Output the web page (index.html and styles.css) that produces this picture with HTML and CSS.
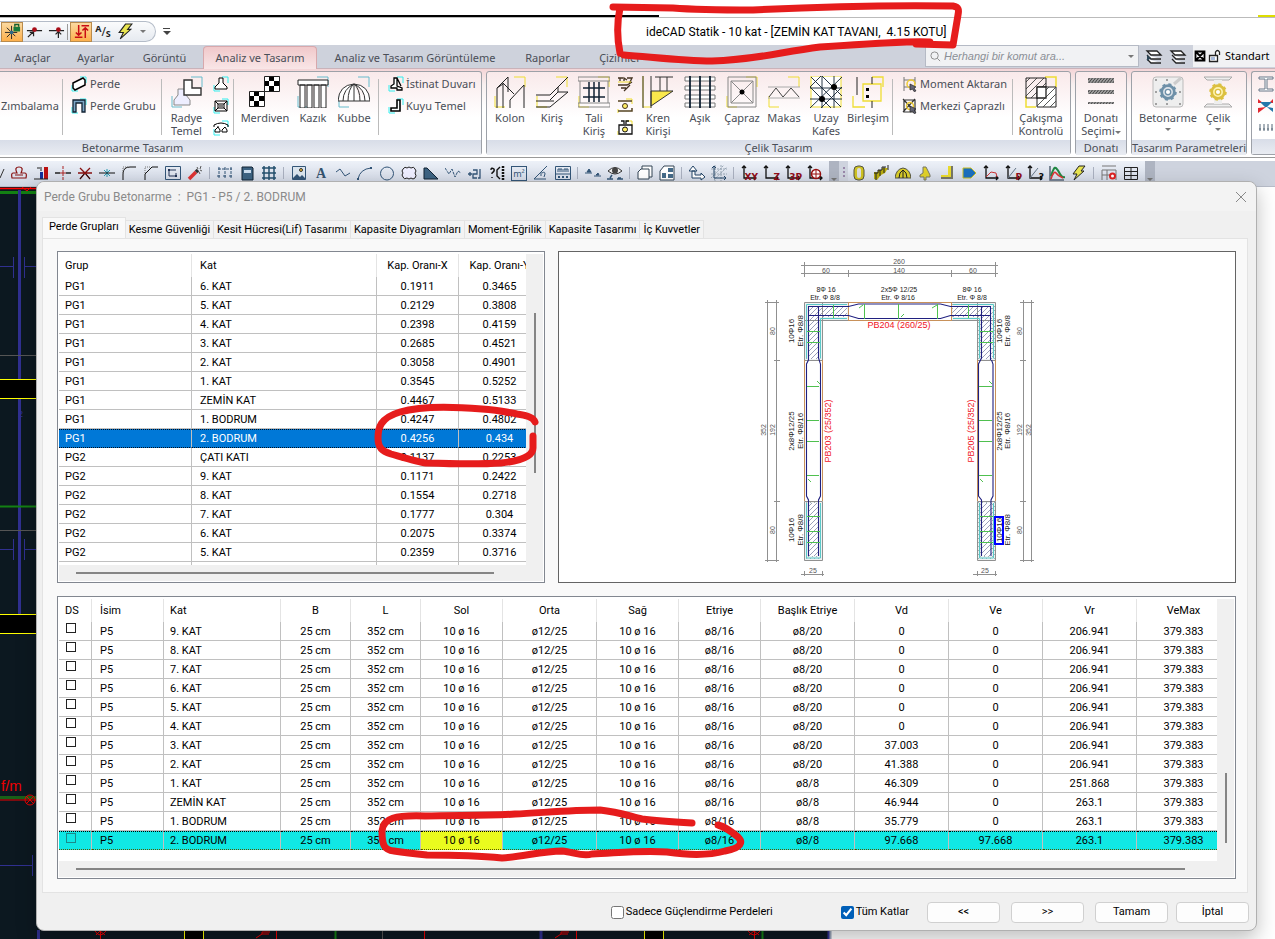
FILE: index.html
```html
<!DOCTYPE html>
<html lang="tr">
<head>
<meta charset="utf-8">
<title>ideCAD Statik</title>
<link rel="stylesheet" href="styles.css">
</head>
<body>
<svg class="defs" aria-hidden="true">
  <defs>
    <pattern id="hatch" width="5" height="5" patternUnits="userSpaceOnUse"><path d="M0 5 5 0" stroke="#8088a8" stroke-width=".8"/></pattern>
    <pattern id="speck" width="4" height="4" patternUnits="userSpaceOnUse"><rect width="4" height="4" fill="#eef2f2"/><path d="M0 0h1v1H0zM2 2h1v1H2z" fill="#a4b4b4"/></pattern>
    <pattern id="diag" width="7" height="7" patternUnits="userSpaceOnUse"><path d="M0 7 7 0" stroke="#444" stroke-width=".9"/></pattern>
    <pattern id="bars" width="3" height="4" patternUnits="userSpaceOnUse"><rect width="3" height="4" fill="#999"/><path d="M0 4 3 0" stroke="#444"/></pattern>
    <pattern id="check" width="10" height="10" patternUnits="userSpaceOnUse"><rect width="10" height="10" fill="#fff"/><path d="M0 0h5v5H0zM5 5h5v5H5z"/></pattern>
    <symbol id="bolt" viewBox="0 0 16 16"><path d="M8 1h6l-4 5h3L3 15l3-6H2z" fill="#e9e550" stroke="#222"/></symbol>
    <symbol id="axes" viewBox="0 0 16 16"><path d="M3 1v12h12M1 3l2-2 2 2M13 11l2 2-2 2" fill="none" stroke="#111" stroke-width="1.3"/></symbol>
    <symbol id="gear" viewBox="0 0 20 20"><circle cx="10" cy="10" r="7" stroke-width="3"/><circle cx="10" cy="10" r="8.5" fill="none" stroke-width="2.5" stroke-dasharray="3.3 3.4"/><circle cx="10" cy="10" r="3" fill="#fff" stroke-width="1.5"/></symbol>
  </defs>
</svg>

<header>
  <div class="topline"><i></i></div>
  <div class="titlebar">
    <div class="quick">
      <button class="on" aria-label="Kilitli kesişim"><svg viewBox="0 0 18 18"><path d="M1 10h13M8 3v14M3 5l9 9M3 15l6-6" stroke="#222" fill="none"/><circle cx="8" cy="10" r="2" fill="#2d6b88"/><path d="M10 4h7v5h-7z" fill="#177a3c"/><path d="M11.500 4V1.500h4V4" fill="none" stroke="#176030" stroke-width="1.500"/></svg></button>
      <button aria-label="Uç nokta"><svg viewBox="0 0 18 18"><path d="M1 8h16M8 9l-6 6M4 10h4v4" stroke="#222" fill="none" stroke-width="1.300"/><circle cx="9" cy="7" r="2.500" fill="#a80d17"/></svg></button>
      <button aria-label="Orta nokta"><svg viewBox="0 0 18 18"><path d="M1 8h16M11 9v7M8 12l3-3 3 3" stroke="#222" fill="none" stroke-width="1.300"/><circle cx="11" cy="7" r="2.500" fill="#a80d17"/></svg></button>
      <span class="vsep"></span>
      <button class="on" aria-label="Yükseklik"><svg viewBox="0 0 18 18"><path d="M6 2v11M3 10l3 3 3-3M2 15h8M13 16V5M10 8l3-3 3 3M9 3h8" stroke="#c90d14" fill="none" stroke-width="1.600"/></svg></button>
      <button class="as" aria-label="Analiz"><b>A</b>/<b class="low">S</b></button>
      <button aria-label="Hızlı"><svg viewBox="0 0 16 16"><use href="#bolt"/></svg></button>
      <button class="narrow" aria-label="Liste"><span class="caret"></span></button>
    </div>
    <button class="more" aria-label="Özelleştir"><span class="caret dark"></span></button>
    <h1>ideCAD Statik - 10 kat - [ZEMİN KAT TAVANI,&nbsp; 4.15 KOTU]</h1>
  </div>
  <nav class="tabs">
    <a href="#" class="t1">Araçlar</a><a href="#" class="t2">Ayarlar</a><a href="#" class="t3">Görüntü</a><a href="#" class="t4 active">Analiz ve Tasarım</a><a href="#" class="t5">Analiz ve Tasarım Görüntüleme</a><a href="#" class="t6">Raporlar</a><a href="#" class="t7">Çizimler</a>
    <label class="search"><svg viewBox="0 0 12 12"><circle cx="5" cy="5" r="4" fill="none" stroke="#888"/><path d="M8 8l3 3" stroke="#888"/></svg><input type="text" placeholder="Herhangi bir komut ara..." aria-label="Komut ara"><span class="caret"></span></label>
    <button class="layer" aria-label="Katmanlar"><svg viewBox="0 0 18 16"><path d="M2 2h10l4 4H6zM2 6l4 4h10M2 10l4 4h10" fill="#fff" stroke="#222" stroke-width="1.300"/><path d="M2 6l4 3-4 3z" fill="#2c4557"/></svg></button>
    <button class="layer" aria-label="Katman seç"><svg viewBox="0 0 18 16"><path d="M2 2h10l4 4H6zM3 6l4 4h9M3 10l4 4h9" fill="#fff" stroke="#222" stroke-width="1.300"/></svg></button>
    <div class="style"><svg viewBox="0 0 28 14"><path d="M1.500 2.500h9v9h-9zM2 3l8 8M10 3l-8 8" fill="none" stroke="#000" stroke-width="1.800"/><path d="M15.500 6.500h8v6h-8zM21.500 6V3q2-3 4 0v3" fill="#fff" stroke="#222" stroke-width="1.300"/><path d="M17 8h4v3h-4z" fill="#a7b9d8"/></svg>Standart</div>
  </nav>

  <div class="ribbon">
    <section class="group g1">
      <div class="items">
        <div class="col z"><button>Zımbalama</button></div><span class="sep"></span>
        <div class="col c2">
          <button><svg viewBox="0 0 16 16"><path d="M1 9v6h6M9 1h6v6" stroke="#3ee" fill="none"/><path d="M2 7l10-5 2 2v5L4 14l-2-2z" fill="#fff" stroke="#000" stroke-width="1.500"/></svg>Perde</button>
          <button><svg viewBox="0 0 16 16"><path d="M1 9v6h6M9 1h6v6" stroke="#3ee" fill="none"/><path d="M2 2h12v12h-3V5H5v9H2z" fill="#7da6c6" stroke="#123" stroke-width="1.300"/></svg>Perde Grubu</button>
        </div><span class="sep"></span>
        <button class="big w49"><svg viewBox="0 0 32 32"><path d="M20 1h11v10M1 20v11h10" stroke="#6bc" fill="none"/><path d="M7 13h8v6l4 5v5H3v-5l4-5z" fill="#eef" stroke="#888"/><path d="M13 4h8v8h9v7H13z" fill="#fff" stroke="#333" stroke-width="1.400"/></svg><span>Radye<br>Temel</span></button>
        <div class="minis">
          <button aria-label="Tekil"><svg viewBox="0 0 16 16"><path d="M1 9v6h6M9 1h6v6" stroke="#3ee" fill="none"/><path d="M6 2h4v5l4 4v2H2v-2l4-4z" fill="#fff" stroke="#000"/></svg></button>
          <button aria-label="Kaset"><svg viewBox="0 0 16 16"><path d="M1 9v6h6M9 1h6v6" stroke="#3ee" fill="none"/><path d="M2 3h12v10H2zM5 6h6v4H5zM2 3l3 3M14 3l-3 3M2 13l3-3M14 13l-3-3M6 8h4" fill="none" stroke="#000"/></svg></button>
          <button aria-label="Sürekli"><svg viewBox="0 0 16 16"><path d="M1 9v6h6M9 1h6v6" stroke="#3ee" fill="none"/><path d="M1 7V5q7-4 14 0v2M2 12v-2l3-3v-1M7 12v-2L5 7M2 12h5M9 12v-2l3-3M14 12v-2l-2-3M9 12h5" fill="none" stroke="#000"/></svg></button>
        </div><span class="sep"></span>
        <button class="big w62"><svg viewBox="0 0 32 32"><path d="M0.500 15.500h15v-15h15v15h-15v15h-15z" fill="url(#check)" stroke="#222"/></svg><span>Merdiven</span></button>
        <button class="big w34"><svg viewBox="0 0 32 32"><path d="M20 1h11v10M1 20v11h10" stroke="#6bc" fill="none"/><path d="M1 4h30v5H1zM3 9h5v23H3zM10 9h5v23h-5zM17 9h5v23h-5zM24 9h5v23h-5z" fill="#fff" stroke="#222"/></svg><span>Kazık</span></button>
        <button class="big w48"><svg viewBox="0 0 32 32"><path d="M20 1h11v10M1 20v11h10" stroke="#6bc" fill="none"/><path d="M0 25Q1 9 16 8q15 1 16 17zM5 25Q5 13 16 8M10 25q0-12 6-17M16 25V8M22 25q0-12-6-17M27 25q0-12-11-17" fill="#fff" stroke="#333"/></svg><span>Kubbe</span></button>
        <span class="sep"></span>
        <div class="col c3">
          <button><svg viewBox="0 0 16 16"><path d="M1 9v6h6M9 1h6v6" stroke="#3ee" fill="none"/><path d="M6 2h3v8l5 2v2H9v-2H3v-2l3-2zM9 2l4 8" fill="#fff" stroke="#000" stroke-width="1.300"/></svg>İstinat Duvarı</button>
          <button><svg viewBox="0 0 16 16"><path d="M1 9v6h6M9 1h6v6" stroke="#3ee" fill="none"/><path d="M9 2h3v11H3v-3h6z" fill="#fff" stroke="#000" stroke-width="1.600"/></svg>Kuyu Temel</button>
        </div>
      </div>
      <h2 class="left">Betonarme Tasarım</h2>
    </section>

    <section class="group g2">
      <div class="items">
        <button class="big w42"><svg viewBox="0 0 32 32"><path d="M20 1h11v10M1 20v11h10" stroke="#ed3" fill="none"/><path d="M3 32V12L14 1v15M3 12l6-4M9 32V7l11 11M16 32V24L30 9v23" fill="none" stroke="#222"/></svg><span>Kolon</span></button>
        <button class="big w42"><svg viewBox="0 0 32 32"><path d="M20 1h11v10M1 20v11h10" stroke="#ed3" fill="none"/><path d="M0 19h14L32 1M0 25h18M0 31h14L32 16H22v-5M22 16l-8 8" fill="none" stroke="#222"/></svg><span>Kiriş</span></button>
        <button class="big w42"><svg viewBox="0 0 32 32"><path d="M20 1h11v10M1 20v11h10" stroke="#ed3" fill="none"/><path d="M0 1h32v4H0zM0 27h32v4H0zM2 5v22M30 5v22" fill="none" stroke="#888"/><path d="M5 12h22M5 21h22M11 6v20M21 6v20M16 6v20" stroke="#123" stroke-width="1.500"/></svg><span>Tali<br>Kiriş</span></button>
        <div class="minis">
          <button aria-label="Kafes"><svg viewBox="0 0 16 16"><path d="M1 2h5M3 2v3M7 5V2l3 2M10 2h5l-3 6M1 9h9l5-3M4 12h5M7 15l6-6" stroke="#432" fill="none" stroke-width="1.300"/><path d="M1 6h13" stroke="#ed3"/></svg></button>
          <button aria-label="Levha"><svg viewBox="0 0 16 16"><path d="M1 15v-4M9 1h6v5" stroke="#ed3" fill="none"/><path d="M1 3h14M1 13h14v-3" fill="none" stroke="#542" stroke-width="1.500"/><circle cx="8" cy="8" r="2.500" fill="#fe6" stroke="#432"/></svg></button>
          <button aria-label="Ankraj"><svg viewBox="0 0 16 16"><path d="M1 15v-4M9 1h6v5" stroke="#ed3" fill="none"/><path d="M4 1h3v3M12 1H9v3M2 5h13v9H2z" fill="none" stroke="#111" stroke-width="1.300"/><circle cx="8" cy="9.500" r="2.500" fill="#fe6" stroke="#111"/></svg></button>
        </div>
        <button class="big w42"><svg viewBox="0 0 32 32"><path d="M1 0v31h8" stroke="#ed3" fill="none"/><path d="M9 15h22L9 30z" fill="#fae84c" stroke="#333"/><path d="M1 0v32M9 0v32M18 1v14M25 1v14M13 1h18" stroke="#333" fill="none"/></svg><span>Kren<br>Kirişi</span></button>
        <button class="big w42"><svg viewBox="0 0 32 32"><path d="M1 1h30v4H1zM1 10h30v4H1zM1 19h30v4H1zM1 27h30v4H1z" fill="#fff" stroke="#777"/><path d="M6 0v32M16 0v32M26 0v32" stroke="#123" stroke-width="1.800"/></svg><span>Aşık</span></button>
        <button class="big w42"><svg viewBox="0 0 32 32"><path d="M20 1h11v10M1 20v11h10" stroke="#ed3" fill="none"/><path d="M2 1h28v30H2zM5 5h22v22H5zM5 5l22 22M27 5L5 27" fill="none" stroke="#888"/><circle cx="16" cy="16" r="2.500"/></svg><span>Çapraz</span></button>
        <button class="big w42"><svg viewBox="0 0 32 32"><path d="M20 1h11v10M1 20v11h10" stroke="#ed3" fill="none"/><path d="M0 11h32M0 22h32" stroke="#aaa"/><path d="M1 21l7-9 7 9 8-9 8 9" fill="none" stroke="#444"/></svg><span>Makas</span></button>
        <button class="big w42"><svg viewBox="0 0 32 32"><path d="M1 0h30v31H1z" fill="#fff" stroke="#ed3"/><path d="M0 12h32M0 23h32M12 0v32M24 0v32M1 1l30 30M0 11L11 0M12 0l20 20M0 11l21 21M0 32L32 1M11 32l21-21" fill="none" stroke="#123" stroke-width=".9"/><circle cx="24" cy="11" r="3"/><circle cx="12" cy="23" r="3"/></svg><span>Uzay<br>Kafes</span></button>
        <button class="big w42"><svg viewBox="0 0 32 32"><path d="M20 1h11v10M1 20v11h12M11 8h18v17H11z" stroke="#ed3" fill="none" stroke-width="1.300"/><path d="M5 1v18M20 1v7M20 25v7" stroke="#222"/><path d="M14 12h3v3h-3zM14 19h3v3h-3z"/></svg><span>Birleşim</span></button>
        <span class="sep gap"></span>
        <div class="col c4">
          <button><svg viewBox="0 0 16 16"><path d="M2 1v14M13 1v7M2 4h11M2 11h6" stroke="#777" fill="none"/><circle cx="9" cy="8" r="4" fill="none" stroke="#ec3" stroke-width="1.500"/><path d="M8 8l6 3-2 1 2 3-2 .5-1.500-2.500L8 14z" fill="#667"  stroke="#222" stroke-width=".700"/></svg>Moment Aktaran</button>
          <button><svg viewBox="0 0 16 16"><path d="M2 2h11v12H2zM1 1l12 13M13 1L1 14" stroke="#333" fill="none" stroke-width="1.200"/><circle cx="8" cy="8" r="3.500" fill="none" stroke="#ec3" stroke-width="1.500"/><path d="M8 8l6 3-2 1 2 3-2 .5-1.500-2.500L8 14z" fill="#667" stroke="#222" stroke-width=".700"/></svg>Merkezi Çaprazlı</button>
        </div><span class="sep"></span>
        <button class="big w56"><svg viewBox="0 0 32 32"><path d="M20 1h11v10M1 20v11h10" stroke="#ed3" fill="none" stroke-width="1.500"/><path d="M1 2h20v20H1z" fill="url(#diag)" stroke="#222"/><path d="M12 11h19v20H12z" fill="#fff" stroke="#222"/><path d="M12 11h19v20H12z" fill="url(#diag)"/><path d="M12 11h9v11h-9z" fill="#fff" stroke="#222" stroke-width="1.300"/></svg><span>Çakışma<br>Kontrolü</span></button>
      </div>
      <h2>Çelik Tasarım</h2>
    </section>

    <section class="group g3">
      <div class="items">
        <button class="big w50"><svg viewBox="0 0 32 32"><path d="M3 2h26v5H3zM3 14h26v4H3zM3 26h26v2H3z" fill="url(#bars)"/></svg><span>Donatı<br>Seçimi<i class="caret"></i></span></button>
      </div>
      <h2>Donatı</h2>
    </section>

    <section class="group g4">
      <div class="items">
        <button class="big w70"><svg viewBox="0 0 32 32"><rect x="1" y="1" width="30" height="30" rx="3" fill="#eee" stroke="#bbb"/><path d="M3 4h2M3 16h2M3 28h2M27 28h2M14 4h2M14 28h2M27 16h2" stroke="#888" stroke-width="1.500"/><path d="M22 8l7-6" stroke="#ccc" stroke-width="3"/><use href="#gear" x="7" y="7" width="18" height="18" fill="#dde4ea" stroke="#6d90a8"/></svg><span>Betonarme</span><i class="caret line"></i></button>
        <button class="big w30"><svg viewBox="0 0 32 32"><path d="M2 1h28l-3 3H5zM5 28h22l3 3H2z" fill="#eee" stroke="#aaa"/><path d="M12 4h8v24h-8z" fill="#eee"/><use href="#gear" x="7" y="7" width="18" height="18" fill="#fff4b0" stroke="#dcc040"/></svg><span>Çelik</span><i class="caret line"></i></button>
      </div>
      <h2>Tasarım Parametreleri</h2>
    </section>

    <section class="group g5">
      <div class="items">
        <div class="minis">
          <button aria-label="Profil"><svg viewBox="0 0 16 16"><path d="M1 1h14v2H9v10h6v2H1v-2h6V3H1z" fill="#fff" stroke="#678"/></svg></button>
          <button aria-label="Moment"><svg viewBox="0 0 16 16"><path d="M0 1l5 4H0zM15 1v4h-4zM0 15v-5l8-1z" fill="#e02830"/><path d="M2 4h12l-5 5H7zM9 9l6 5v-4z" fill="#27a"/></svg></button>
          <button aria-label="Yük"><svg viewBox="0 0 16 16"><path d="M2 4v7M6 4v7M10 4v7M14 4v7M1 9h2M5 9h2M9 9h2M13 9h2" stroke="#567"/></svg></button>
        </div>
      </div>
      <h2>&nbsp;</h2>
    </section>
  </div>

  <div class="toolbar">
    <div class="strip s1">
      <button class="part" aria-label="Çizgi"><svg viewBox="8 0 8 16"><path d="M8 13l4-9" stroke="#333"/></svg></button>
      <button aria-label="Bulut"><svg viewBox="0 0 16 16"><path d="M6 8Q3 2 8 2t2 6h4q2 0 1 5H1q-1-5 1-5zM4 10h8" fill="none" stroke="#811" stroke-width="1.200"/></svg></button>
      <button aria-label="Ölçek"><svg viewBox="0 0 16 16"><path d="M11 2h4v12h-4z" fill="#b11"/><path d="M7 7h3v7H7z" fill="#11309a"/><path d="M1 14h14M4 3h3M8 2v4" stroke="#222"/></svg></button>
      <button aria-label="Kes"><svg viewBox="0 0 16 16"><path d="M0 8h5M11 8h5" stroke="#222" stroke-width="1.600"/><path d="M5 8h6M8 5v6M8 1v3M8 12v3" stroke="#a22"/></svg></button>
      <button aria-label="Kesişim"><svg viewBox="0 0 16 16"><path d="M1 8h14M3 14l5-6 5 6M3 3l5 5 5-5" stroke="#811" fill="none" stroke-width="1.300"/><path d="M3 14l4-5M13 14l-4-5" stroke="#111"/></svg></button>
      <button aria-label="Böl"><svg viewBox="0 0 16 16"><path d="M5 5l6 6M11 5l-6 6M8 4v8" stroke="#289ab0"/><path d="M0 8h16" stroke="#111"/></svg></button>
      <button aria-label="Radyus"><svg viewBox="0 0 16 16"><path d="M2 15V9q0-7 7-7h6" fill="none" stroke="#111"/><path d="M2 8V2h6" fill="none" stroke="#777" stroke-dasharray="1"/></svg></button>
      <button aria-label="Pah"><svg viewBox="0 0 16 16"><path d="M2 15V9l7-7h6" fill="none" stroke="#111"/><path d="M2 8V2h6" fill="none" stroke="#777" stroke-dasharray="1"/></svg></button>
      <button aria-label="Germe"><svg viewBox="0 0 16 16"><path d="M.500 1.500h15v13H.500z" fill="none" stroke="#357"/><path d="M4 5v6h7M5 5h6M11 8v3" fill="none" stroke="#235"/><path d="M3 4h2v2H3zM10 10h2v2h-2z" fill="#235"/></svg></button>
      <button aria-label="Değnek"><svg viewBox="0 0 16 16"><path d="M2 14l7-7" stroke="#d33" stroke-width="3.500"/><path d="M9 7l2-2" stroke="#333" stroke-width="3.500"/><path d="M10 2l1 2M14 1l-1 3M15 6l-2-1M13 9l-1-2" stroke="#555"/></svg></button>
      <span class="tsep"></span>
      <button aria-label="Ölçü"><svg viewBox="0 0 16 16"><path d="M1 4h14M2 2v12M8 2v12M14 2v12M0 11h4M6 11h4M12 11h4" stroke="#357" stroke-dasharray="3 1"/></svg></button>
      <button aria-label="Kat"><svg viewBox="0 0 16 16"><path d="M3 2h10l1 1v12H3z" fill="#3d6382" stroke="#123"/><path d="M5 5h7v3H5z" fill="#cde"/></svg></button>
      <button aria-label="Izgara"><svg viewBox="0 0 16 16"><path d="M3 1v14M8 1v14M13 1v14M1 3h14M1 8h14M1 13h14" stroke="#24506e" stroke-width="1.500"/></svg></button>
      <span class="tsep"></span>
      <button aria-label="Resim"><svg viewBox="0 0 16 16"><path d="M1.500 1.500h13v13h-13z" fill="#dbe5ee" stroke="#357"/><path d="M2 13l4-4 3 3 2-2 3 3v1H2z" fill="#357"/><circle cx="10" cy="5" r="1.500" fill="#eb3" stroke="#333"/></svg></button>
      <button class="letter" aria-label="Yazı">A</button>
      <button aria-label="Çoklu çizgi"><svg viewBox="0 0 16 16"><path d="M1 7l4-3 5 7 5-3" fill="none" stroke="#357"/></svg></button>
      <button aria-label="Yay"><svg viewBox="0 0 16 16"><path d="M1 14q2-10 13-11" fill="none" stroke="#357"/><path d="M0 13h2v2H0zM13 2h2v2h-2z" fill="#357"/></svg></button>
      <button aria-label="Daire"><svg viewBox="0 0 16 16"><circle cx="8" cy="8.500" r="6.500" fill="none" stroke="#357"/></svg></button>
      <button aria-label="Revizyon"><svg viewBox="0 0 16 16"><path d="M2 4q2-3 4-1 2-2 4 0 3-2 4 1 2 2 0 4 2 3 0 5-2 2-4 0-2 2-4 0-3 2-4-1-2-2 0-4-2-2 0-4z" fill="#eef" stroke="#222"/></svg></button>
      <button aria-label="Tarama"><svg viewBox="0 0 16 16"><path d="M1 3v11h14L4 3z" fill="#3d6382" stroke="#123"/></svg></button>
      <button aria-label="Eğri"><svg viewBox="0 0 16 16"><path d="M0 3l4 6 3-5 3 8 3-6 3 2" fill="none" stroke="#357" stroke-dasharray="3 1"/></svg></button>
      <button aria-label="Kot"><svg viewBox="0 0 16 16"><path d="M1 9h4M3 7v4M6 5h4v4H6v4h4M13 4v9h-2" fill="none" stroke="#357" stroke-width="1.300"/></svg></button>
      <button aria-label="Soru"><svg viewBox="0 0 16 16"><path d="M2 5q0-3 3-1 1 2-2 4v1M3 12v1M11 2L8 5v6l3 3" fill="none" stroke="#111" stroke-width="1.400"/><path d="M14 1v14" stroke="#111" stroke-width="2.500" stroke-dasharray="2 1"/></svg></button>
      <button class="m2" aria-label="Alan"><span>m²</span></button>
      <button aria-label="Açı"><svg viewBox="0 0 16 16"><path d="M1 14L14 1M1 14h12M9 8q3-2 3 1l-1 3M8 7v4" fill="none" stroke="#357"/></svg></button>
      <button aria-label="Birim"><svg viewBox="0 0 16 16"><path d="M.500 1.500h15v13H.500zM0 9h16M3 7V4h4v3M5 4v3M9 7V4h4v3M11 4v3" fill="none" stroke="#357"/><path d="M3 12h10" stroke="#357" stroke-width="2" stroke-dasharray="2 2"/></svg></button>
      <span class="tsep"></span>
      <button aria-label="Kot farkı"><svg viewBox="0 0 16 16"><path d="M0 8h7M9 11h7M2 7l2-3 2 3zM11 10l2-2 1 2z" fill="#357" stroke="#357"/></svg></button>
      <button aria-label="Görünür"><svg viewBox="0 0 16 16"><path d="M1 6q7-7 14 0-7 6-14 0z" fill="#eee" stroke="#333"/><circle cx="8" cy="5.500" r="3" fill="#444"/><path d="M0 14h6M10 14h6M3 13l2-3M11 13h3" stroke="#357" stroke-width="1.500"/></svg></button>
      <span class="tsep"></span>
      <button aria-label="Kopya"><svg viewBox="0 0 16 16"><path d="M5 1h10v11H5z" fill="#fff" stroke="#345"/><path d="M1 7l3-3h8v10H1z" fill="#fff" stroke="#345"/></svg></button>
      <button aria-label="Pencere"><svg viewBox="0 0 16 16"><path d="M1 6l4-5h10v14H1z" fill="#fff" stroke="#345"/><path d="M3 8h4v5H3zM9 3h5v4H9zM9 9h5v4H9z" fill="#456b89"/></svg></button>
      <span class="tsep"></span>
      <button aria-label="Yön"><svg viewBox="0 0 16 16"><path d="M3 6h3v4h6V8l4 4-4 3v-2H3zM0 6l4-5 4 5z" fill="#fff" stroke="#246"/></svg></button>
      <button aria-label="Eksenler"><svg viewBox="0 0 16 16"><path d="M0 4h16M0 9h16M4 0v16M10 0v16M0 13L13 0M3 15L16 2" stroke="#9aa8b6" stroke-dasharray="2 1"/><path d="M3 1v12h12M1 3l2-2 2 2M13 11l2 2-2 2" fill="none" stroke="#246"/></svg></button>
      <span class="tsep"></span>
      <button class="ax" aria-label="XY"><svg viewBox="0 0 16 16"><use href="#axes"/></svg><b>XY</b></button>
      <button class="ax" aria-label="Z"><svg viewBox="0 0 16 16"><use href="#axes"/></svg><b>Z</b></button>
      <button class="ax" aria-label="3P"><svg viewBox="0 0 16 16"><use href="#axes"/></svg><b>3P</b></button>
      <button aria-label="Merkez"><svg viewBox="0 0 16 16"><use href="#axes"/><circle cx="9" cy="9" r="4.500" fill="#fff" stroke="#911" stroke-width="1.500"/><path d="M4 9h10M9 4v10" stroke="#911"/></svg></button>
    </div>
    <button class="end" aria-label="Araç çubuğu"><span class="caret"></span></button>
    <span class="grip"></span>
    <div class="strip">
      <button aria-label="Kolon"><svg viewBox="0 0 16 16"><rect x="3" y="1" width="10" height="14" rx="4" fill="#cfc322" stroke="#554"/><rect x="6" y="3" width="4" height="10" rx="2" fill="#ddd"/></svg></button>
      <button aria-label="Merdiven"><svg viewBox="0 0 16 16"><path d="M1 14V7h4V5h4V3h6l-3 5-4 2-4 5z" fill="#b9ad10"/><path d="M3 15V8M7 11V5M11 8V2M15 5V0M1 8h4V5h4V2h4" fill="none" stroke="#222"/></svg></button>
      <button aria-label="Kubbe"><svg viewBox="0 0 16 16"><path d="M0 13Q1 4 8 3q7 1 8 10z" fill="#d9cd28" stroke="#554"/><path d="M4 13q0-6 4-8 4 2 4 8M8 5v8" fill="none" stroke="#222"/></svg></button>
      <button aria-label="Temel"><svg viewBox="0 0 16 16"><path d="M6 2h3l4 8v2H9v3H7v-3H3v-2l3-2z" fill="#e0d128" stroke="#776"/></svg></button>
      <button aria-label="Duvar"><svg viewBox="0 0 16 16"><path d="M9 1h5v13H2v-4h7z" fill="#776"/><path d="M9 1h3v11H2v-2h7z" fill="#e8da2e"/></svg></button>
      <button aria-label="Etiket"><svg viewBox="0 0 16 16"><path d="M2 3h8l5 5-5 5H2z" fill="#1b6fbe" stroke="#c8bd22"/></svg></button>
      <button aria-label="Grafik"><svg viewBox="0 0 16 16"><use href="#axes"/><path d="M3 12l5-5 5 1 1 4" fill="none" stroke="#c33"/></svg></button>
      <button class="ax" aria-label="P grafiği"><svg viewBox="0 0 16 16"><use href="#axes"/><path d="M3 13L11 3" stroke="#678"/></svg><b>P</b></button>
      <button class="ax q" aria-label="Sorgu grafiği"><svg viewBox="0 0 16 16"><use href="#axes"/><path d="M3 13L11 3" stroke="#678"/></svg><b>?</b></button>
      <button aria-label="Spektrum"><svg viewBox="0 0 16 16"><path d="M1 1v14h14" fill="none" stroke="#567" stroke-width="1.500"/><path d="M2 11q3-10 5-8t4 6 5 3" fill="none" stroke="#284" stroke-width="2"/><path d="M2 14q3-9 5-6t7 5" fill="none" stroke="#d33" stroke-width="1.500"/></svg></button>
      <button aria-label="Analiz"><svg viewBox="0 0 16 16"><use href="#bolt"/></svg></button>
      <span class="tsep"></span>
      <button aria-label="Tablo düzenle"><svg viewBox="0 0 16 16"><path d="M1 1h14M1 5v10M6 5v10M1 5h14v10M1 10h14" fill="none" stroke="#777"/><circle cx="11.500" cy="11" r="2.500" fill="#fff" stroke="#d22" stroke-width="2"/></svg></button>
      <button aria-label="Tablo"><svg viewBox="0 0 16 16"><path d="M1.500 2.500h13v12h-13zM1 6.500h14M1 10.500h14M8 2v12" fill="none" stroke="#222"/></svg></button>
    </div>
    <button class="end" aria-label="Araç çubuğu"><span class="caret"></span></button>
  </div>
</header>

<main>
  <svg class="cad" viewBox="0 187 832 752" width="832" height="752">
    <rect y="187" width="830" height="752" fill="#0c1820"/>
    <path d="M0 192.500h36" stroke="#138013" stroke-width="3"/><path d="M0 188.500h36" stroke="#f00" stroke-width="1.500"/>
    <path d="M19.500 190v190M19.500 399v216M38.500 930v9M541 930v9M829 930v9" stroke="#303090" stroke-width="3"/>
    <path d="M0 266.500h13M24 266.500h12M13.500 257v21M24.500 257v21M0 549.500h13M24 549.500h12M13.500 539v21M24.500 539v21M0 865.500h32M32.500 855v21" stroke="#303090" fill="none"/>
    <path d="M0 355.500h36M0 530.500h36M382.500 930v9" stroke="#555"/>
    <path d="M0 506.500h36M335.500 930v9M762.500 930v9" stroke="#138013" stroke-width="2"/>
    <path d="M-2 379.500h40v19H-2zM-2 614.500h40v19H-2zM184.500 928h19v14h-19zM644.500 928h19v14h-19z" stroke="#ff0"/>
    <path d="M0 797.500h36" stroke="#186018" stroke-width="3"/>
    <path d="M0 800h36M100.500 930v9M276.500 930v9M424.500 930v9M576.500 930v9M754.500 930v9M95 931q5 8 11 0M96 935l4-4 5 4M256 938l6-4v-2h8M262 934h7M555 938l6-4v-2h8M561 934h7M748 931q6 8 12 0M749 935l5-4 5 4M22 187l5 4 4-4" stroke="#e00" fill="none"/>
    <circle cx="30" cy="800" r="5" fill="none" stroke="#e00"/><path d="M26 796l8 8M34 796l-8 8" stroke="#e00"/>
    <text x="1" y="791" fill="#e00" class="load">f/m</text>
    <text x="18" y="417" fill="#303090" class="axis">2</text>
    <path d="M830.500 187v752" stroke="#9aa6ba" stroke-width="2"/>
  </svg>
</main>

<div class="dialog" role="dialog" aria-labelledby="dt">
  <div class="dhead"><h2 id="dt">Perde Grubu Betonarme&nbsp; :&nbsp; PG1 - P5 / 2. BODRUM</h2><button aria-label="Kapat"><svg viewBox="0 0 12 12"><path d="M1 1l10 10M11 1L1 11" stroke="#888"/></svg></button></div>
  <div class="dtabs" role="tablist">
    <button role="tab" aria-selected="true">Perde Grupları</button><button role="tab">Kesme Güvenliği</button><button role="tab">Kesit Hücresi(Lif) Tasarımı</button><button role="tab">Kapasite Diyagramları</button><button role="tab">Moment-Eğrilik</button><button role="tab">Kapasite Tasarımı</button><button role="tab">İç Kuvvetler</button>
  </div>
  <div class="page">
    <div class="upper">
      <div class="listbox lb1">
        <div class="clip">
        <table class="list">
          <colgroup><col class="k133"><col class="k185"><col class="k82"><col class="k82"></colgroup>
          <thead><tr><th>Grup</th><th>Kat</th><th class="c">Kap. Oranı-X</th><th class="c">Kap. Oranı-Y</th></tr></thead>
          <tbody>
            <tr><td>PG1</td><td>6. KAT</td><td>0.1911</td><td>0.3465</td></tr>
            <tr><td>PG1</td><td>5. KAT</td><td>0.2129</td><td>0.3808</td></tr>
            <tr><td>PG1</td><td>4. KAT</td><td>0.2398</td><td>0.4159</td></tr>
            <tr><td>PG1</td><td>3. KAT</td><td>0.2685</td><td>0.4521</td></tr>
            <tr><td>PG1</td><td>2. KAT</td><td>0.3058</td><td>0.4901</td></tr>
            <tr><td>PG1</td><td>1. KAT</td><td>0.3545</td><td>0.5252</td></tr>
            <tr><td>PG1</td><td>ZEMİN KAT</td><td>0.4467</td><td>0.5133</td></tr>
            <tr><td>PG1</td><td>1. BODRUM</td><td>0.4247</td><td>0.4802</td></tr>
            <tr class="sel"><td>PG1</td><td>2. BODRUM</td><td>0.4256</td><td>0.434</td></tr>
            <tr><td>PG2</td><td>ÇATI KATI</td><td>0.1137</td><td>0.2253</td></tr>
            <tr><td>PG2</td><td>9. KAT</td><td>0.1171</td><td>0.2422</td></tr>
            <tr><td>PG2</td><td>8. KAT</td><td>0.1554</td><td>0.2718</td></tr>
            <tr><td>PG2</td><td>7. KAT</td><td>0.1777</td><td>0.304</td></tr>
            <tr><td>PG2</td><td>6. KAT</td><td>0.2075</td><td>0.3374</td></tr>
            <tr><td>PG2</td><td>5. KAT</td><td>0.2359</td><td>0.3716</td></tr>
            <tr class="rest"><td></td><td></td><td></td><td></td></tr>
          </tbody>
        </table>
        </div>
        <div class="vbar"><span></span></div>
        <div class="hbar"><span></span></div>
      </div>
      <div class="drawing">
        <svg viewBox="559 252 676 330" class="plan">
          <g fill="none" stroke="#909090">
            <path d="M801 265.500h197M801 273.500h197M804.500 262v15M995.500 262v15M848.500 270v7M951.500 270v7M767.500 300v262M776.500 300v262M1023.500 300v262M1031.500 300v262M765 302.500h14M765 560.500h14M774 360.500h6M774 501.500h6M1020 302.500h14M1020 560.500h14M1020 360.500h6M1020 501.500h6M801 574.500h23M973 574.500h24M804.500 571v5M822.500 571v5M977.500 571v5M995.500 571v5"/>
          </g>
          <path d="M804.500 302.500h44v18h-26v40h-18zM951.500 302.500h44v58h-18v-40h-26zM804.500 501.500h18v59h-18zM977.500 501.500h18v59h-18z" fill="url(#speck)" stroke="#909090"/>
          <path d="M808 306h39v11h-28v42h-11zM953 306h39v53h-11v-42h-28zM808 503h11v53h-11zM981 503h11v53h-11z" fill="#fff"/>
          <path d="M808 306h39v11h-28v42h-11zM953 306h39v53h-11v-42h-28zM808 503h11v53h-11zM981 503h11v53h-11z" fill="url(#hatch)"/>
          <path d="M804 320.500h44M951 320.500h44M822.500 302v18M977.500 302v18" stroke="#909090"/>
          <g fill="none" stroke="#c8915a"><path d="M848 302.500h104M848 320.500h104M804.500 360v141M822.500 360v141M977.500 360v141M995.500 360v141M848.500 302v18M951.500 302v18"/></g>
          <path d="M847 304.500h-40.500v54M847 318.500h-26.500v40M953 304.500h40.500v54M953 318.500h26.500v40M806.500 503v55h14v-55M979.500 503v55h14v-55" fill="none" stroke="#59c8c8"/>
          <path d="M808.500 360V306.500h40l10-2.500h82l10 2.500h40V360M808.500 315.500h40l10 3h82l10-3h40M808.500 360l-2 4v132l2 4v56M818.500 306v52l2 6v132l-2 4v56M991.500 360l1.500 4v132l-2 4v56M981.500 306v52l-3 6v132l3 4v56" fill="none" stroke="#202080" stroke-width="1.100"/>
          <path d="M864.500 304v15M898.500 304v15M937.500 304v15M833.500 305v13M968.500 305v13M807 331.500h13M807 342.500h13M980 331.500h13M980 342.500h13M807 386.500h12M979 386.500h13M807 420.500h12M979 420.500h13M807 441.500h12M979 441.500h13M807 475.500h12M979 475.500h13M807 516.500h13M807 531.500h13M807 542.500h13M980 516.500h13M980 531.500h13M980 542.500h13M859 308l4-3M901 317l3-3M932 308l5-3M817 381l3 3M989 381l3 3M808 479l3 3M980 479l3 3" stroke="#4fc04f"/>
          <g class="dim"><text x="899" y="264">260</text><text x="826" y="273">60</text><text x="899" y="273">140</text><text x="973" y="273">60</text><text x="813" y="573">25</text><text x="985" y="573">25</text>
            <text transform="translate(766 430)rotate(-90)">352</text><text transform="translate(775 331)rotate(-90)">80</text><text transform="translate(775 430)rotate(-90)">192</text><text transform="translate(775 530)rotate(-90)">80</text><text transform="translate(1022 331)rotate(-90)">80</text><text transform="translate(1022 430)rotate(-90)">192</text><text transform="translate(1031 430)rotate(-90)">352</text><text transform="translate(1022 530)rotate(-90)">80</text></g>
          <g class="bar"><text x="826" y="292">8Φ 16</text><text x="825" y="300">Etr. Φ 8/8</text><text x="899" y="292">2x5Φ 12/25</text><text x="898" y="300">Etr. Φ 8/16</text><text x="972" y="292">8Φ 16</text><text x="972" y="300">Etr. Φ 8/8</text></g>
          <g class="bar side"><text transform="translate(794 331)rotate(-90)">10Φ16</text><text transform="translate(803 331)rotate(-90)">Etr. Φ8/8</text><text transform="translate(794 431)rotate(-90)">2x8Φ12/25</text><text transform="translate(803 431)rotate(-90)">Etr. Φ8/16</text><text transform="translate(794 530)rotate(-90)">10Φ16</text><text transform="translate(803 530)rotate(-90)">Etr. Φ8/8</text>
            <text transform="translate(1002 331)rotate(-90)">10Φ16</text><text transform="translate(1010 331)rotate(-90)">Etr. Φ8/8</text><text transform="translate(1002 431)rotate(-90)">2x8Φ12/25</text><text transform="translate(1010 431)rotate(-90)">Etr. Φ8/16</text><text transform="translate(1002 530)rotate(-90)">10Φ16</text><text transform="translate(1010 530)rotate(-90)">Etr. Φ8/8</text></g>
          <rect x="995" y="517" width="8" height="27" fill="none" stroke="#00f" stroke-width="2"/>
          <g class="name"><text x="899" y="328">PB204 (260/25)</text><text transform="translate(831 431)rotate(-90)">PB203 (25/352)</text><text transform="translate(974 431)rotate(-90)">PB205 (25/352)</text></g>
        </svg>
      </div>
    </div>

    <div class="listbox lb2">
      <div class="clip">
      <table class="list wide">
        <colgroup><col class="k33"><col class="k72"><col class="k117"><col class="k70"><col class="k70"><col class="k82"><col class="k94"><col class="k82"><col class="k82"><col class="k94"><col class="k94"><col class="k94"><col class="k94"><col class="k94"></colgroup>
        <thead><tr><th>DS</th><th>İsim</th><th>Kat</th><th>B</th><th>L</th><th>Sol</th><th>Orta</th><th>Sağ</th><th>Etriye</th><th>Başlık Etriye</th><th>Vd</th><th>Ve</th><th>Vr</th><th>VeMax</th></tr></thead>
        <tbody>
          <tr><td><input type="checkbox" aria-label="9. KAT"></td><td>P5</td><td>9. KAT</td><td>25 cm</td><td>352 cm</td><td>10 ø 16</td><td>ø12/25</td><td>10 ø 16</td><td>ø8/16</td><td>ø8/20</td><td>0</td><td>0</td><td>206.941</td><td>379.383</td></tr>
          <tr><td><input type="checkbox" aria-label="8. KAT"></td><td>P5</td><td>8. KAT</td><td>25 cm</td><td>352 cm</td><td>10 ø 16</td><td>ø12/25</td><td>10 ø 16</td><td>ø8/16</td><td>ø8/20</td><td>0</td><td>0</td><td>206.941</td><td>379.383</td></tr>
          <tr><td><input type="checkbox" aria-label="7. KAT"></td><td>P5</td><td>7. KAT</td><td>25 cm</td><td>352 cm</td><td>10 ø 16</td><td>ø12/25</td><td>10 ø 16</td><td>ø8/16</td><td>ø8/20</td><td>0</td><td>0</td><td>206.941</td><td>379.383</td></tr>
          <tr><td><input type="checkbox" aria-label="6. KAT"></td><td>P5</td><td>6. KAT</td><td>25 cm</td><td>352 cm</td><td>10 ø 16</td><td>ø12/25</td><td>10 ø 16</td><td>ø8/16</td><td>ø8/20</td><td>0</td><td>0</td><td>206.941</td><td>379.383</td></tr>
          <tr><td><input type="checkbox" aria-label="5. KAT"></td><td>P5</td><td>5. KAT</td><td>25 cm</td><td>352 cm</td><td>10 ø 16</td><td>ø12/25</td><td>10 ø 16</td><td>ø8/16</td><td>ø8/20</td><td>0</td><td>0</td><td>206.941</td><td>379.383</td></tr>
          <tr><td><input type="checkbox" aria-label="4. KAT"></td><td>P5</td><td>4. KAT</td><td>25 cm</td><td>352 cm</td><td>10 ø 16</td><td>ø12/25</td><td>10 ø 16</td><td>ø8/16</td><td>ø8/20</td><td>0</td><td>0</td><td>206.941</td><td>379.383</td></tr>
          <tr><td><input type="checkbox" aria-label="3. KAT"></td><td>P5</td><td>3. KAT</td><td>25 cm</td><td>352 cm</td><td>10 ø 16</td><td>ø12/25</td><td>10 ø 16</td><td>ø8/16</td><td>ø8/20</td><td>37.003</td><td>0</td><td>206.941</td><td>379.383</td></tr>
          <tr><td><input type="checkbox" aria-label="2. KAT"></td><td>P5</td><td>2. KAT</td><td>25 cm</td><td>352 cm</td><td>10 ø 16</td><td>ø12/25</td><td>10 ø 16</td><td>ø8/16</td><td>ø8/20</td><td>41.388</td><td>0</td><td>206.941</td><td>379.383</td></tr>
          <tr><td><input type="checkbox" aria-label="1. KAT"></td><td>P5</td><td>1. KAT</td><td>25 cm</td><td>352 cm</td><td>10 ø 16</td><td>ø12/25</td><td>10 ø 16</td><td>ø8/16</td><td>ø8/8</td><td>46.309</td><td>0</td><td>251.868</td><td>379.383</td></tr>
          <tr><td><input type="checkbox" aria-label="ZEMİN KAT"></td><td>P5</td><td>ZEMİN KAT</td><td>25 cm</td><td>352 cm</td><td>10 ø 16</td><td>ø12/25</td><td>10 ø 16</td><td>ø8/16</td><td>ø8/8</td><td>46.944</td><td>0</td><td>263.1</td><td>379.383</td></tr>
          <tr><td><input type="checkbox" aria-label="1. BODRUM"></td><td>P5</td><td>1. BODRUM</td><td>25 cm</td><td>352 cm</td><td>10 ø 16</td><td>ø12/25</td><td>10 ø 16</td><td>ø8/16</td><td>ø8/8</td><td>35.779</td><td>0</td><td>263.1</td><td>379.383</td></tr>
          <tr class="cur"><td><input type="checkbox" aria-label="2. BODRUM"></td><td>P5</td><td>2. BODRUM</td><td>25 cm</td><td>352 cm</td><td class="mark">10 ø 16</td><td>ø12/25</td><td>10 ø 16</td><td>ø8/16</td><td>ø8/8</td><td>97.668</td><td>97.668</td><td>263.1</td><td>379.383</td></tr>
        </tbody>
      </table>
      </div>
      <div class="vbar"><span></span></div>
      <div class="hbar"><span></span></div>
    </div>
  </div>
  <footer>
    <label class="f1"><input type="checkbox">Sadece Güçlendirme Perdeleri</label>
    <label class="f2"><input type="checkbox" checked>Tüm Katlar</label>
    <button>&lt;&lt;</button><button>&gt;&gt;</button><button>Tamam</button><button class="last">İptal</button>
  </footer>
</div>

<svg class="ink" viewBox="0 0 1275 939" aria-hidden="true">
  <g fill="none" stroke="#e61c1c" stroke-width="7" stroke-linecap="round" stroke-linejoin="round">
    <path d="M613 7l60 1c25 2 55 2 80 2 60-3 130-5 200-4 6 1 6 4 5 9l-5 30-37-1 14-2c-20-1-50 1-110 5-40 5-65 13-108 14-30 0-60-4-88-6"/>
    <path d="M620 8c-3 14-3 30 0 45"/>
    <path d="M535 422q-2-6-18-8-20-4-35-5c-35-3-62-3-82 3-20 6-22 16-22 26s4 13 13 16c14 4 27 8 35 9 30 1 60 1 75 0 20-2 32-7 32-15v-12"/>
    <path d="M692 823c-18-1-35-2-50-4-13-3-23-7-42-9-30 0-60 3-85 4-30 2-60 1-90 2-30-1-42 2-43 15 0 14 2 19 12 20 13 2 23 3 33 4 30 0 55 1 75 3 20-1 40-7 60-7 12 1 20 6 30 3 25-1 50-4 75-2 20 3 40 4 58-1 17-3 18-9 13-14-6-5-12-10-20-12"/>
  </g>
</svg>
</body>
</html>
```
FILE: styles.css
```css
* { box-sizing: border-box; }
body { margin: 0; min-height: 100vh; position: relative; display: flex; flex-direction: column; background: #fff; color: #000; font: 11px/14px Roboto, "Liberation Sans", sans-serif; overflow-x: hidden; }
button { border: 0; background: none; padding: 0; margin: 0; font: inherit; color: inherit; }
a { color: inherit; text-decoration: none; }
h1, h2 { margin: 0; font-weight: 400; }
.defs { position: absolute; width: 0; height: 0; }
header { font-family: "Noto Sans", sans-serif; color: #4a4e57; }
.caret { display: inline-block; border: 3px solid transparent; border-top-color: #777; border-bottom: 0; vertical-align: middle; }

.topline { height: 18px; border-bottom: 1px solid #bbb; display: flex; align-items: flex-end; background: linear-gradient(#000, #000) 0 100% / 659px 2px no-repeat; }
.topline i { width: 17px; height: 2px; background: #dd0; margin-left: auto; }
.titlebar { height: 27px; display: flex; align-items: center; }
.quick { display: flex; align-items: center; width: 156px; height: 21px; padding-left: 1px; border: 1px solid #b4bcc8; border-left: 0; border-radius: 0 11px 11px 0; background: linear-gradient(#fafbfc, #e6eaf0); }
.quick button { width: 22px; height: 20px; display: flex; align-items: center; justify-content: center; }
.quick .on { background: linear-gradient(#fbd9a0, #fdb04c); border: 1px solid #b98b4c; }
.quick svg { width: 17px; height: 17px; }
.quick .narrow { width: 14px; }
.quick .as { color: #222; font-size: 12px; }
.as b { font-size: 9px; padding-bottom: 5px; }
.as .low { padding: 5px 0 0; }
.vsep { width: 3px; height: 16px; border-left: 1px solid #999; }
.more { width: 22px; }
.caret.dark { border-width: 4px; border-bottom: 0; border-top-color: #444; position: relative; }
.caret.dark::before { content: ""; position: absolute; left: -4px; top: -7px; width: 7px; height: 1px; background: #444; }
h1 { margin-left: 468px; font: 12px/16px Roboto, sans-serif; color: #000; white-space: nowrap; }

.tabs { height: 24px; display: flex; background: #ced2dc; border-bottom: 1px solid #c9b3ba; }
.tabs a { line-height: 25px; text-align: center; white-space: nowrap; }
.t1 { width: 65px; }
.t2 { width: 61px; }
.t3 { width: 77px; }
.t4 { width: 114px; }
.t5 { width: 196px; }
.t6 { width: 69px; }
.t7 { width: 76px; }
.tabs .active { margin-top: 1px; height: 23px; line-height: 22px; border: 1px solid #d8a8ac; border-bottom: 0; border-radius: 4px 4px 0 0; background: linear-gradient(#f0c8ca, #f9e6e7); }
.search { margin-left: auto; width: 214px; height: 22px; display: flex; align-items: center; gap: 3px; padding: 0 4px 0 4px; border: 1px solid #b5bac5; background: #f1f2f4; }
.search svg { width: 11px; height: 11px; }
.search input { flex: 1; min-width: 0; border: 0; padding: 0; background: none; font: italic 11px "Liberation Sans", sans-serif; }
.search input::placeholder { color: #8b8f96; }
.layer { width: 24px; padding-left: 6px; }
.layer svg { width: 18px; height: 16px; display: block; }
.style { width: 82px; margin-left: 6px; height: 22px; display: flex; align-items: center; gap: 3px; padding-left: 1px; background: #f1f2f4; color: #000; font-size: 11px; }
.style svg { width: 28px; height: 14px; }

.ribbon { display: flex; gap: 4px; padding: 2px 0; height: 89px; background: linear-gradient(#f4d5d7, #f8f0f0 16px, #fff 40px); border-bottom: 1px solid #999; overflow: hidden; }
.group { display: flex; flex-direction: column; justify-content: space-between; flex: none; border: 1px solid #9da1a8; border-radius: 3px; background: linear-gradient(#f9e9ea, #fff 45px); }
.g1 { border-left: 0; width: 482px; border-radius: 0 3px 3px 0; }
.g2 { width: 585px; }
.g3 { width: 52px; }
.g4 { width: 116px; }
.g5 { flex: 1; border-right: 0; }
.group h2 { font-size: 11px; line-height: 15px; height: 15px; text-align: center; white-space: nowrap; background: linear-gradient(#d8dde8, #e9ecf2); }
.g1 h2.left { padding-right: 216px; }
.items { display: flex; height: 68px; }
.g2 .items { padding-left: 2px; }
.g4 .items { padding-left: 1px; }
.g5 .items { padding-left: 4px; }
.sep { width: 1px; margin: 7px 0 5px; background: #bbb; flex: none; }
.sep.gap { margin-left: 3px; }
.col { display: flex; flex-direction: column; flex: none; padding-top: 1px; }
.col button { display: flex; align-items: center; gap: 3px; height: 22px; white-space: nowrap; }
.col svg, .minis svg { width: 16px; height: 16px; flex: none; display: block; }
.col.z { width: 62px; padding: 23px 0 0 1px; }
.c2 { width: 98px; padding-left: 8px; }
.c3 { padding-left: 9px; }
.c4 { width: 119px; padding-left: 9px; }
.c3 button, .c4 button { gap: 2px; }
.big { display: flex; flex-direction: column; align-items: center; padding-top: 4px; line-height: 13px; white-space: nowrap; flex: none; height: 68px; }
.big svg { display: block; width: 32px; height: 32px; margin-bottom: 3px; flex: none; }
.caret.line { margin-top: 4px; }
.w30 { width: 30px; }
.w34 { width: 34px; }
.w42 { width: 42px; }
.w48 { width: 48px; }
.w49 { width: 49px; }
.w50 { width: 50px; }
.w56 { width: 56px; }
.w62 { width: 62px; }
.w70 { width: 70px; }
.minis { width: 22px; flex: none; display: flex; flex-direction: column; gap: 6px; padding: 4px 0 0 2px; }

.toolbar { display: flex; height: 26px; margin-top: 3px; background: #ced3de; border-bottom: 1px solid #b7bcc8; overflow: hidden; }
.strip { display: flex; padding-right: 3px; background: linear-gradient(#edf1f8, #cdd4e2); }
.strip button { width: 22px; height: 24px; display: flex; align-items: center; justify-content: center; flex: none; }
.strip svg { width: 16px; height: 16px; display: block; }
.strip .part { width: 8px; justify-content: flex-start; }
.strip .part svg { width: 8px; }
.tsep { width: 8px; flex: none; margin: 6px 0 7px; background: linear-gradient(#a9b0bf, #a9b0bf) 3px 0 / 1px 100% no-repeat; }
.strip .letter { font: bold 14px "Liberation Serif", serif; color: #35536e; padding-top: 2px; }
.m2 span { width: 16px; height: 15px; border: 1px solid #357; font-size: 9px; line-height: 13px; text-align: center; color: #357; }
.strip .ax { position: relative; }
.ax b { position: absolute; right: 2px; bottom: 3px; font: bold 9px/9px "DejaVu Sans", sans-serif; color: #900e1a; }
.ax.q b { color: #111; }
.end { width: 10px; background: #aeb4c1; padding-top: 10px; }
.grip { width: 9px; margin: 6px 0 8px; background: repeating-linear-gradient(#98a 0 2px, transparent 2px 4px) 4px 0 / 2px 100% no-repeat; }

main { flex: 1; background: #fff; }
.cad { display: block; }
.load { font: 15px "Liberation Sans", sans-serif; }
.axis { font: 9px "Liberation Sans", sans-serif; }

.dialog { position: absolute; left: 36px; right: 18px; top: 181px; background: #f0f0f0; border: 1px solid #b0b0b0; border-radius: 8px; box-shadow: 0 8px 20px rgba(0, 0, 0, .25); padding: 0 8px 0 5px; }
.dhead { height: 29px; margin: 0 -8px 0 -5px; padding: 0 9px 0 7px; display: flex; align-items: center; justify-content: space-between; background: #f3f3f3; border-radius: 8px 8px 0 0; }
.dhead h2 { font: 12px/16px Roboto, sans-serif; color: #8a8a8a; }
.dhead svg { width: 12px; height: 12px; display: block; }
.dtabs { display: flex; align-items: flex-end; height: 27px; }
.dtabs button { height: 18px; padding: 0 3px; background: #f3f3f3; border: 1px solid #e3e3e3; border-left: 0; border-bottom: 0; white-space: nowrap; }
.dtabs [aria-selected] { height: 21px; padding: 0 6px 2px; background: #f9f9f9; border-left: 1px solid #e3e3e3; }
.page { background: #f9f9f9; border: 1px solid #e3e3e3; padding: 12px 11px 13px 14px; display: flex; flex-direction: column; gap: 13px; }
.upper { display: flex; gap: 13px; }
.listbox { display: grid; grid-template-columns: minmax(0, 1fr) 17px; border: 1px solid #828790; padding: 2px 1px 1px; background: #fff; }
.lb1 { width: 488px; flex: none; height: 332px; grid-template-rows: 1fr 16px; }
.lb2 { height: 283px; grid-template-rows: 1fr 16px; }
.clip { overflow: hidden; min-height: 0; }
.vbar { grid-row: 1 / 3; grid-column: 2; background: #f0f0f0; }
.vbar span { display: block; width: 2px; height: 160px; margin: 59px 0 0 8px; background: #858585; }
.lb2 .vbar span { height: 70px; margin-top: 174px; }
.hbar { background: #f0f0f0; padding: 7px 32px 0 17px; }
.hbar span { display: block; height: 2px; background: #858585; }
.list { border-collapse: separate; border-spacing: 0; table-layout: fixed; width: 482px; }
.wide { width: 1172px; }
.list th { height: 23px; padding: 0 0 0 6px; font-weight: 400; text-align: left; border-right: 1px solid #e4e4e4; white-space: nowrap; }
.list th.c { padding: 0; text-align: center; }
.list td { height: 19px; padding: 2px 0 0 6px; border-right: 1px solid #c0c0c0; border-bottom: 1px solid #c0c0c0; white-space: nowrap; line-height: 14px; }
.list td:nth-child(2), .list th:nth-child(2) { padding-left: 8px; }
.list td:nth-child(n+3) { text-align: center; padding-left: 0; }
.wide td:nth-child(3), .wide th:nth-child(3) { text-align: left; padding-left: 6px; }
.wide th:nth-child(n+4) { text-align: center; padding: 0; }
.list .rest td { height: 3px; padding: 0; line-height: 1px; border-bottom: 0; }
.list .sel td, .list .cur td { padding-top: 1px; }
.sel td { background: #0078d7; color: #fff; border-top: 1px dotted #012; border-bottom: 1px dotted #012; }
.cur td { background: #10e8e4; border-top: 1px dotted #000; border-bottom: 1px dotted #550; }
.cur .mark { background: #eafb1e; }
.list td input { appearance: none; display: block; width: 10px; height: 10px; margin: 0 0 6px 1px; border: 1px solid #222; background: #fff; }
.list .cur td input { background: none; border-color: #1a8a8a; }
.k33 { width: 33px; }
.k70 { width: 70px; }
.k72 { width: 72px; }
.k82 { width: 82px; }
.k94 { width: 94px; }
.k117 { width: 117px; }
.k133 { width: 133px; }
.k185 { width: 185px; }
.wide td:first-child { padding-top: 0; }
.drawing { flex: 1; border: 1px solid #646464; background: #fff; height: 332px; }
.plan { display: block; width: 100%; height: 100%; }
.plan text { font-family: "Liberation Sans", sans-serif; font-size: 9px; text-anchor: middle; }
.dim { fill: #555; }
.plan .dim text { font-size: 7px; }
.plan .bar text { font-size: 7px; }
.plan .side text { font-size: 8px; }
.bar { fill: #222; }
.name { fill: #f0141e; }

footer { display: flex; align-items: center; height: 37px; justify-content: flex-end; padding-top: 1px; margin-right: -1px; }
footer button { width: 73px; height: 21px; margin-right: 11px; border: 1px solid #d0d0d0; border-radius: 4px; background: #fdfdfd; }
footer .last { margin: 0 0 0 -3px; }
footer label { display: flex; align-items: center; gap: 2px; }
footer input { width: 13px; height: 13px; margin: 0; accent-color: #005fb8; }
.f1 { margin-right: 68px; }
.f2 { margin-right: 18px; }
.ink { position: absolute; left: 0; top: 0; width: 1275px; height: 939px; pointer-events: none; }
```
